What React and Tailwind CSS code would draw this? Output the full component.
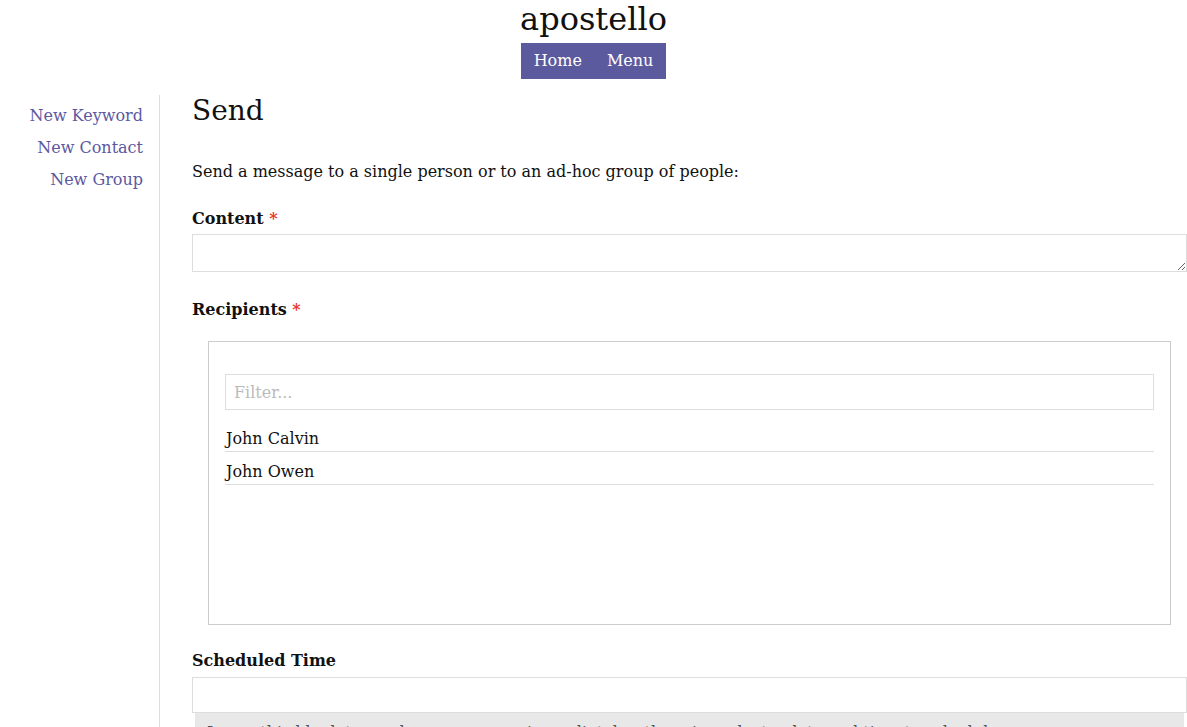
export default function App() {
  const serif = { fontFamily: '"DejaVu Serif", serif' }
  return (
    <div className="min-h-screen bg-white text-[#111] font-['DejaVu_Serif',serif] text-[16px] leading-6" style={serif}>
      <header className="flex flex-col items-center">
        <h1 className="text-[32px] leading-[36px] pt-px">apostello</h1>
        <nav className="flex mt-[6px] bg-[#5c5a9e] text-white h-9 items-center">
          <a href="#" className="px-[12.5px] leading-9">Home</a>
          <a href="#" className="px-[12.5px] leading-9">Menu</a>
        </nav>
      </header>

      <div className="flex mt-4">
        <aside className="w-[160px] shrink-0 border-r border-[#ddd] pt-[5px] pr-4 text-right min-h-[640px]">
          {['New Keyword', 'New Contact', 'New Group'].map((l) => (
            <a key={l} href="#" className="block leading-8 text-[#5c59a0]">{l}</a>
          ))}
        </aside>

        <main className="flex-1 pl-8 pt-px">
          <h2 className="text-[28px] leading-[30px]">Send</h2>
          <p className="mt-[34px]">Send a message to a single person or to an ad-hoc group of people:</p>

          <label className="block mt-[23px] font-bold">
            Content <span className="text-[#e8372e]">*</span>
          </label>
          <textarea className="block w-full mt-[3px] h-[38px] border border-[#ddd] outline-none resize-y" rows={1} />

          <label className="block mt-[26px] font-bold">
            Recipients <span className="text-[#e8372e]">*</span>
          </label>
          <div className="mx-4 mt-[19px] h-[284px] border border-[#ccc] px-4 pt-8">
            <input
              placeholder="Filter..."
              className="block w-full h-[36px] border border-[#ddd] px-2 outline-none placeholder:text-[#bbb]"
            />
            <ul className="mt-[9px]">
              {['John Calvin', 'John Owen'].map((n) => (
                <li key={n} className="pt-2 pl-px border-b border-[#ddd]">{n}</li>
              ))}
            </ul>
          </div>

          <label className="block mt-6 font-bold">Scheduled Time</label>
          <input className="block w-full mt-[4px] h-[36px] border border-[#ddd] outline-none" />
          <div className="mx-[3px] bg-[#e8e8e8] px-3 py-2 text-[#555]">
            Leave this blank to send your message immediately, otherwise select a date and time to schedule your message.
          </div>
        </main>
      </div>
    </div>
  )
}
